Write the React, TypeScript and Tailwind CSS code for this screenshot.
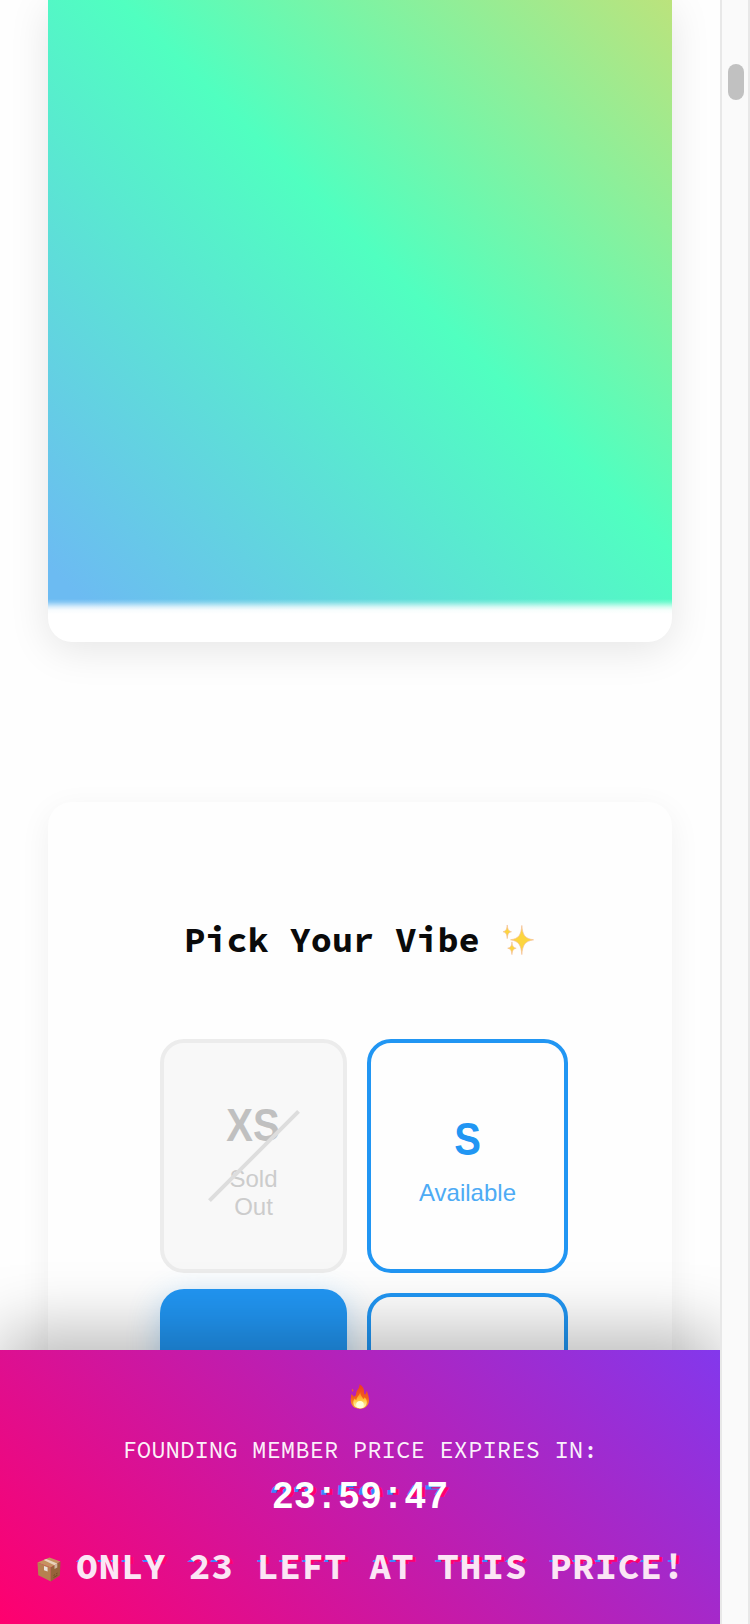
import type { ReactNode } from "react";

function Sparkles() {
  return (
    <svg viewBox="0 0 34 34" className="ml-0.5 h-[33px] w-8" aria-hidden="true">
      <g fill="#fcd53f" stroke="#f5bd95" strokeWidth="0.7" strokeLinejoin="round">
        <path d="M20 1c.9 10.500 3.200 13.800 12.500 15.300C23.200 17.800 20.900 21.500 20 32c-.9-10.500-3.200-14.200-12-15.700C16.800 14.800 19.100 11.500 20 1Z" />
        <path d="M4.500 .5c.5 4.800 1.300 6.400 4.500 7.200-3.200.8-4 2.400-4.500 7.300C4 10.100 3.200 8.500 0 7.700 3.200 6.900 4 5.300 4.500 .5Z" />
        <path d="M9.500 18.500c.5 4.500 1.300 5.900 4.500 6.700-3.200.8-4 2.300-4.500 6.800-.5-4.500-1.300-6-4.500-6.800 3.200-.8 4-2.200 4.500-6.700Z" />
      </g>
    </svg>
  );
}

function Flame() {
  return (
    <svg viewBox="0 0 20 25" className="h-[25px] w-5" aria-hidden="true">
      <defs>
        <linearGradient id="flame-outer" x1="0" y1="0" x2="0" y2="1">
          <stop offset="0" stopColor="#ee3a22" />
          <stop offset="0.55" stopColor="#f4601c" />
          <stop offset="1" stopColor="#ffb52f" />
        </linearGradient>
        <linearGradient id="flame-inner" x1="0" y1="0" x2="0" y2="1">
          <stop offset="0" stopColor="#fa7a1f" />
          <stop offset="0.5" stopColor="#ffc83b" />
          <stop offset="1" stopColor="#ffffd8" />
        </linearGradient>
      </defs>
      <path fill="url(#flame-outer)" d="M9.500.3c3.300 2 5 4.600 4.600 8.200-.1 1.300.3 2 .9 1.900.8-.1 1.200-2.400 2-4 .2 2.500 2.200 6 2 10.300-.3 4.500-3.800 8-9.200 8C4.300 24.700 1 21.400.8 17c-.2-2.500.5-4.200.3-6.800 1.300.4 2.200 1.300 2.600 2.600C5.600 12.200 6 11 6.200 9.300 6.500 6 9.700 4.700 9.500.3Z" />
      <path fill="#f0612c" d="M2.300 4.700c1 .8 1.200 1.800.7 3.100C1.700 7 1.500 5.900 2.300 4.700Z" />
      <path fill="url(#flame-inner)" d="M10.200 8c.4 4.200 2.500 5.200 3 7.100.8-.4 1.200-1 1.400-1.900 1.600 1.600 2.500 3.500 2.200 5.500-.4 3.500-3 5.600-6.700 5.600s-6.700-2-6.800-5.700c0-1.600.6-3 1.600-4.100.3 1 .8 1.400 1.500 1.700.2-3.300 3.200-5 3.800-8.200Z" />
      <ellipse cx="10" cy="20.600" rx="3.800" ry="3.600" fill="#ffffd8" />
    </svg>
  );
}

function Package() {
  return (
    <svg viewBox="0 0 24 25" className="h-[25px] w-6" aria-hidden="true">
      <path fill="#c6925f" d="M.5 5.500 12.500.5l11 4-9.700 6Z" />
      <path fill="#b6814f" d="m.5 5.500 13.300 5v14L1.300 18.300Z" />
      <path fill="#97643a" d="M13.800 10.500 23.500 4.500l-.6 14-9.100 6Z" />
      <path fill="#ead3bd" d="m6.600 3.100 2.700-1.200 11 4.600-2.800 1.700Z" />
      <path fill="#d0b79e" d="m17.500 8.200 2.800-1.700v3.900l-2.800 1.600Z" />
      <path fill="#ebe3dc" d="m7 9 3.600 1.300v4.200L7 13.200Z" />
      <path fill="none" stroke="#69431f" strokeWidth="0.8" d="m16.500 18.500 1.500-.9m1-.6 1.500-.9M16.500 20.500l4-2.300" />
    </svg>
  );
}

function Glitch({ text, bands }: { text: string; bands: string }) {
  return (
    <span
      data-text={text}
      className={`relative isolate inline-block whitespace-nowrap before:absolute before:top-[3px] before:-left-[3px] before:-z-10 before:text-[#3a86ff] before:content-[attr(data-text)] after:absolute after:top-[2px] after:left-[3px] after:-z-10 after:text-[#ff006e] after:content-[attr(data-text)] ${bands}`}
    >
      {text}
    </span>
  );
}

function SizeLabel({ children }: { children: ReactNode }) {
  return (
    <span className="mt-px scale-x-[0.86] font-['Liberation_Sans',sans-serif] text-[46.500px] leading-[66px] font-bold">
      {children}
    </span>
  );
}

export default function App() {
  return (
    <div className="flex h-[1624px] w-[750px] overflow-hidden bg-white font-['Liberation_Sans',sans-serif]">
      <div className="relative h-full w-[720px] shrink-0 overflow-hidden bg-[#fefefe]">
        <main className="flex flex-col gap-40 px-12">
          <section className="h-[642px] overflow-hidden rounded-b-3xl bg-white shadow-[0_8px_40px_rgba(0,0,0,0.1)]">
            <div className="h-[615px] bg-[linear-gradient(to_bottom,transparent_599px,rgba(255,255,255,0.2)_602px,rgba(255,255,255,0.75)_607px,rgba(255,255,255,0.95)_610px,#fff_614px),linear-gradient(45deg,#6cbbf2_35px,#50ffc0_485px,#bfe27a_890px)]" />
          </section>

          <section className="flex h-[900px] flex-col items-center rounded-3xl bg-[#fefefe] pt-[113px] shadow-[0_8px_32px_rgba(0,0,0,0.06)]">
            <h2 className="-ml-px flex h-[50px] items-center font-['Source_Code_Pro','DejaVu_Sans_Mono',monospace] text-[35.2px] leading-[50px] font-bold whitespace-pre text-[#0a0a0a]">
              Pick Your Vibe <Sparkles />
            </h2>
            <div className="mt-[74px] ml-2 grid grid-cols-[187px_201px] grid-rows-[234px_234px] gap-5">
              <button className="relative flex flex-col items-center justify-center rounded-3xl border-4 border-[#ececec] bg-[#f8f8f8] text-[#c0c0c0]">
                <SizeLabel>XS</SizeLabel>
                <span className="mt-[7px] w-16 text-center text-2xl leading-7 text-[#cccccc]">Sold Out</span>
                <span className="absolute h-1 w-[126px] -rotate-45 bg-[#dddddd]" />
              </button>
              <button className="flex flex-col items-center justify-center rounded-3xl border-4 border-[#2196f3] bg-[#fefefe] text-[#2196f3]">
                <SizeLabel>S</SizeLabel>
                <span className="mt-[7px] text-2xl leading-7 text-[#4dabf5]">Available</span>
              </button>
              <button className="-mt-1 rounded-3xl bg-[#2196f3] shadow-[0_8px_32px_rgba(33,150,243,0.3)]" />
              <button className="rounded-3xl border-4 border-[#2196f3] bg-[#fefefe]" />
            </div>
          </section>
        </main>

        <aside className="absolute inset-x-0 bottom-0 flex h-[274px] flex-col items-center bg-[linear-gradient(45deg,#ff006e,#8338ec)] pt-[34px] font-['Source_Code_Pro','DejaVu_Sans_Mono',monospace] text-white shadow-[0_-20px_60px_rgba(0,0,0,0.26)]">
          <Flame />
          <p className="mt-[25px] text-2xl leading-8 whitespace-nowrap text-white/95">FOUNDING MEMBER PRICE EXPIRES IN:</p>
          <p className="mt-1.5 scale-y-[1.07] font-['Liberation_Mono',monospace] text-[36.800px] leading-[50px] font-bold">
            <Glitch
              text="23:59:47"
              bands="before:[clip-path:inset(11px_0_30px_0)] after:[clip-path:inset(14px_0_27px_0)]"
            />
          </p>
          <div className="mt-[19px] flex items-center self-start pl-[37px] text-[36.500px] leading-[50px] font-bold tracking-[0.66px]">
            <span className="mt-1.5 mr-[15px]">
              <Package />
            </span>
            <span className="text-[#fbe6f5]">
              <Glitch
                text="ONLY 23 LEFT AT THIS PRICE!"
                bands="before:[clip-path:inset(16px_0_32px_0)] after:[clip-path:inset(12px_0_29px_0)]"
              />
            </span>
          </div>
        </aside>
      </div>

      <div className="flex flex-1 justify-end border-x-2 border-[#e8e8e8] bg-[#fafafa] pt-16 pr-1">
        <div className="h-9 w-4 rounded-full bg-[#c1c1c1]" />
      </div>
    </div>
  );
}
